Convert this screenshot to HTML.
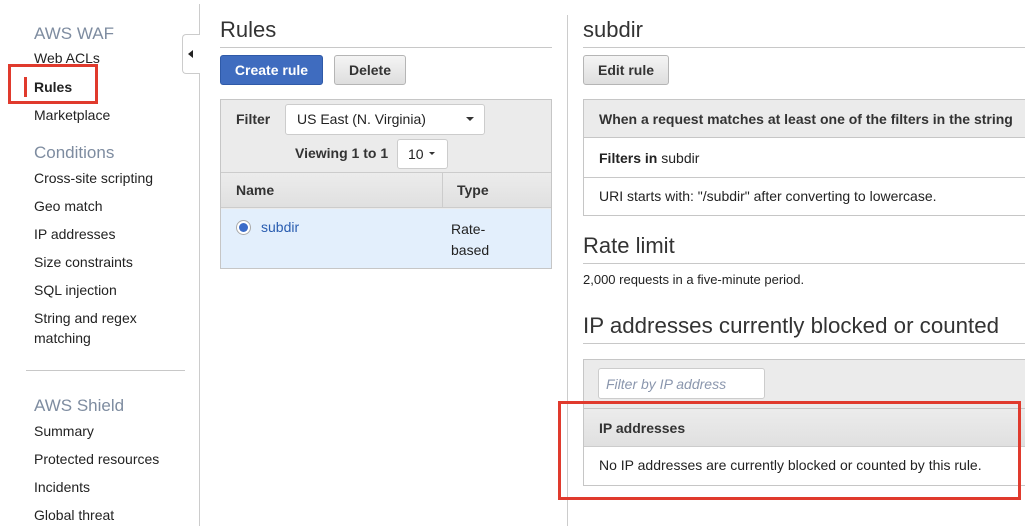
<!DOCTYPE html>
<html><head><style>
*{margin:0;padding:0;box-sizing:border-box}
body{width:1025px;height:526px;overflow:hidden;background:#fff;font-family:"Liberation Sans",Arial,sans-serif;color:#222;font-size:14px;position:relative}
.a{position:absolute;white-space:nowrap}
.nav{left:34px;font-size:14px;color:#222}
.h{color:#7e8ca0;font-size:17px}
.hr{position:absolute;height:1px;background:#c8c8c8}
.btn{position:absolute;border:1px solid #b5b5b5;border-radius:3px;background:linear-gradient(#f4f4f4,#dedede);font-weight:bold;font-size:14px;text-align:center;line-height:28px;color:#333}
.box{position:absolute;border:1px solid #c6c6c6}
</style></head><body>
<div class="a nav h" style="top:24px">AWS WAF</div>
<div class="a nav" style="top:50px">Web ACLs</div>
<div class="a nav" style="top:79px;font-weight:bold">Rules</div>
<div class="a nav" style="top:107px">Marketplace</div>
<div class="a nav h" style="top:143px">Conditions</div>
<div class="a nav" style="top:170px">Cross-site scripting</div>
<div class="a nav" style="top:198px">Geo match</div>
<div class="a nav" style="top:226px">IP addresses</div>
<div class="a nav" style="top:254px">Size constraints</div>
<div class="a nav" style="top:282px">SQL injection</div>
<div class="a nav" style="top:308px;line-height:20px">String and regex<br>matching</div>
<div class="hr" style="left:26px;top:370px;width:159px"></div>
<div class="a nav h" style="top:396px">AWS Shield</div>
<div class="a nav" style="top:423px">Summary</div>
<div class="a nav" style="top:451px">Protected resources</div>
<div class="a nav" style="top:479px">Incidents</div>
<div class="a nav" style="top:507px">Global threat</div>
<div style="position:absolute;left:8px;top:64px;width:90px;height:40px;border:3px solid #e03a2d"></div>
<div style="position:absolute;left:24px;top:77px;width:3px;height:20px;background:#e03a2d"></div>

<div style="position:absolute;left:199px;top:4px;width:1px;height:522px;background:#ccc"></div>
<div style="position:absolute;left:182px;top:34px;width:18px;height:40px;border:1px solid #ccc;border-right:none;border-radius:4px 0 0 4px;background:#fff"></div>
<div style="position:absolute;left:188px;top:50px;width:0;height:0;border-top:4px solid transparent;border-bottom:4px solid transparent;border-right:5px solid #222"></div>

<div class="a" style="left:220px;top:17px;font-size:22px;color:#333">Rules</div>
<div class="hr" style="left:220px;top:47px;width:332px"></div>
<div class="btn" style="left:220px;top:55px;width:103px;height:30px;background:#3f6cbf;border-color:#2f5aa8;color:#fff">Create rule</div>
<div class="btn" style="left:334px;top:55px;width:72px;height:30px">Delete</div>
<div class="box" style="left:220px;top:99px;width:332px;height:170px;background:#ebebeb"></div>
<div class="a" style="left:236px;top:111px;font-weight:bold;color:#333">Filter</div>
<div style="position:absolute;left:285px;top:104px;width:200px;height:31px;background:#fff;border:1px solid #ccc;border-radius:3px"></div>
<div class="a" style="left:297px;top:111px">US East (N. Virginia)</div>
<div style="position:absolute;left:466px;top:117px;border-left:4px solid transparent;border-right:4px solid transparent;border-top:4px solid #333"></div>
<div class="a" style="left:295px;top:145px;font-weight:bold;color:#333">Viewing 1 to 1</div>
<div style="position:absolute;left:397px;top:139px;width:51px;height:30px;background:#fff;border:1px solid #ccc;border-radius:3px"></div>
<div class="a" style="left:408px;top:146px">10</div>
<div style="position:absolute;left:429px;top:152px;border-left:3px solid transparent;border-right:3px solid transparent;border-top:3px solid #333"></div>
<div style="position:absolute;left:221px;top:172px;width:330px;height:36px;background:linear-gradient(#ececec,#e0e0e0);border-top:1px solid #ccc;border-bottom:1px solid #ccc"></div>
<div style="position:absolute;left:442px;top:172px;width:1px;height:36px;background:#ccc"></div>
<div class="a" style="left:236px;top:182px;font-weight:bold;color:#333">Name</div>
<div class="a" style="left:457px;top:182px;font-weight:bold;color:#333">Type</div>
<div style="position:absolute;left:221px;top:209px;width:330px;height:59px;background:#e3effc"></div>
<div style="position:absolute;left:236px;top:220px;width:15px;height:15px;border-radius:50%;border:1px solid #aaa;background:#fff"></div>
<div style="position:absolute;left:239px;top:223px;width:9px;height:9px;border-radius:50%;background:#3c6cc8"></div>
<div class="a" style="left:261px;top:219px;color:#2a5db0">subdir</div>
<div class="a" style="left:451px;top:219px;line-height:21px">Rate-<br>based</div>

<div style="position:absolute;left:567px;top:15px;width:1px;height:511px;background:#ccc"></div>
<div class="a" style="left:583px;top:17px;font-size:22px;color:#333">subdir</div>
<div class="hr" style="left:583px;top:47px;width:442px"></div>
<div class="btn" style="left:583px;top:55px;width:86px;height:30px">Edit rule</div>
<div class="box" style="left:583px;top:99px;width:450px;height:117px"></div>
<div style="position:absolute;left:584px;top:100px;width:441px;height:38px;background:#ebebeb;border-bottom:1px solid #c6c6c6"></div>
<div class="a" style="left:599px;top:111px;font-weight:bold;color:#333">When a request matches at least one of the filters in the string</div>
<div class="hr" style="left:584px;top:177px;width:441px"></div>
<div class="a" style="left:599px;top:150px"><b>Filters in</b> subdir</div>
<div class="a" style="left:599px;top:188px">URI starts with: "/subdir" after converting to lowercase.</div>
<div class="a" style="left:583px;top:233px;font-size:22px;color:#333">Rate limit</div>
<div class="hr" style="left:583px;top:263px;width:442px"></div>
<div class="a" style="left:583px;top:272px;font-size:13px">2,000 requests in a five-minute period.</div>
<div class="a" style="left:583px;top:313px;font-size:22.3px;color:#333">IP addresses currently blocked or counted</div>
<div class="hr" style="left:583px;top:343px;width:442px"></div>
<div class="box" style="left:583px;top:359px;width:450px;height:127px"></div>
<div style="position:absolute;left:584px;top:360px;width:441px;height:48px;background:#ebebeb"></div>
<div style="position:absolute;left:598px;top:368px;width:167px;height:31px;background:#fff;border:1px solid #ccc;border-radius:3px"></div>
<div class="a" style="left:606px;top:376px;font-style:italic;color:#8a96ad">Filter by IP address</div>
<div style="position:absolute;left:584px;top:408px;width:441px;height:39px;background:linear-gradient(#ececec,#e0e0e0);border-top:1px solid #c6c6c6;border-bottom:1px solid #ccc"></div>
<div class="a" style="left:599px;top:420px;font-weight:bold;color:#333">IP addresses</div>
<div class="a" style="left:599px;top:457px">No IP addresses are currently blocked or counted by this rule.</div>
<div style="position:absolute;left:558px;top:401px;width:463px;height:99px;border:3px solid #e03a2d"></div>
</body></html>
